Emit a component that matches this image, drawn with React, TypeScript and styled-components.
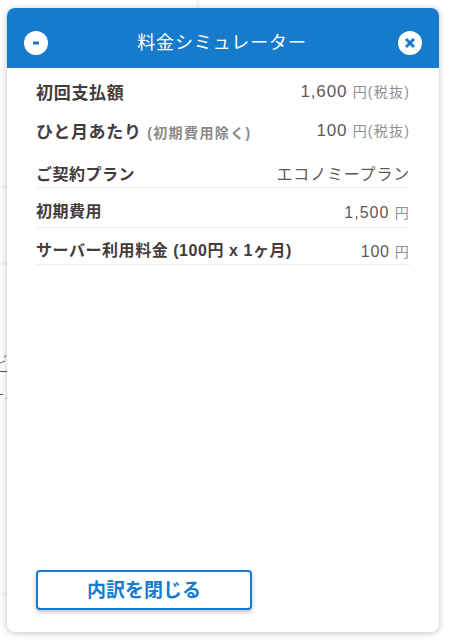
import styled, { createGlobalStyle } from 'styled-components'

const GlobalStyle = createGlobalStyle`
  html, body {
    margin: 0;
    padding: 0;
    background: #fff;
    font-family: 'Liberation Sans', Arial, 'Noto Sans CJK JP', sans-serif;
  }
`

const Page = styled.div`
  position: relative;
  width: 451px;
  height: 642px;
  overflow: hidden;
  background: #fff;
`

// faint remains of the page behind the modal
const BehindLine = styled.div<{ $top: number; $h: number; $color: string; $w?: number }>`
  position: absolute;
  left: 0;
  top: ${p => p.$top}px;
  width: ${p => p.$w ?? 7}px;
  height: ${p => p.$h}px;
  background: ${p => p.$color};
`

const BehindColumn = styled.div`
  position: absolute;
  left: 196px;
  top: 0;
  width: 4px;
  height: 8px;
  background: #f7f7f7;
`

const Modal = styled.div`
  position: absolute;
  left: 7px;
  top: 8px;
  width: 432px;
  height: 624px;
  display: flex;
  flex-direction: column;
  background: #fff;
  border-radius: 8px;
  box-shadow: 0 1px 6px rgba(0, 0, 0, 0.25);
  overflow: hidden;
`

const Header = styled.div`
  flex: none;
  height: 60px;
  padding: 10px 17px 0;
  display: flex;
  align-items: center;
  justify-content: space-between;
  background: #167bcc;
  color: #fff;
  box-sizing: border-box;
`

const Title = styled.div`
  font-size: 18px;
  line-height: 24px;
  letter-spacing: 0.9px;
  margin-left: -2px;
`

const RoundButton = styled.div`
  width: 24px;
  height: 24px;
  border-radius: 50%;
  background: #fff;
  display: flex;
  align-items: center;
  justify-content: center;
`

const Body = styled.div`
  flex: 1;
  display: flex;
  flex-direction: column;
  padding: 0 29px;
`

const SummaryRow = styled.div<{ $h: number }>`
  height: ${p => p.$h}px;
  display: flex;
  justify-content: space-between;
  align-items: center;
`

const DetailRow = styled.div<{ $h: number; $pad: number }>`
  height: ${p => p.$h}px;
  padding-bottom: ${p => p.$pad}px;
  box-sizing: border-box;
  display: flex;
  justify-content: space-between;
  align-items: flex-end;
  border-bottom: 1px solid #eeeeee;
`

const Label = styled.div<{ $size: number; $spacing: number }>`
  font-size: ${p => p.$size}px;
  letter-spacing: ${p => p.$spacing}px;
  font-weight: 700;
  color: #443b3b;
`

const Note = styled.span`
  font-size: 14px;
  letter-spacing: 1.4px;
  color: #8a8a8a;
`

const Value = styled.div<{ $size: number; $spacing: number }>`
  font-size: ${p => p.$size}px;
  letter-spacing: ${p => p.$spacing}px;
  color: #5f5757;
`

const Unit = styled.span`
  font-size: 14px;
  letter-spacing: 1.2px;
  color: #8f8f8f;
`

const Footer = styled.div`
  margin-top: auto;
  padding-bottom: 22px;
`

const CloseButton = styled.button`
  display: block;
  width: 216px;
  height: 40px;
  padding: 0 0 3px;
  background: #fff;
  border: 2px solid #167bcc;
  border-radius: 4px;
  box-shadow: 0 2px 4px rgba(0, 0, 0, 0.25);
  color: #167bcc;
  font-family: inherit;
  font-size: 19px;
  font-weight: 700;
`

const Speck = styled.svg`
  position: absolute;
  left: 0;
  top: 354px;
`

export default function App() {
  return (
    <Page>
      <GlobalStyle />
      <BehindColumn />
      <BehindLine $top={185} $h={4} $color="#f6f6f6" />
      <BehindLine $top={261} $h={4} $color="#f6f6f6" />
      <BehindLine $top={371} $h={1} $color="#5b4f4f" />
      <BehindLine $top={394} $h={1} $color="#5b4f4f" $w={3} />
      <BehindLine $top={592} $h={4} $color="#f6f6f6" />
      <Speck width="7" height="46" viewBox="0 0 7 46">
        <path d="M0 9 L5 7" stroke="#6b5f5f" strokeWidth="1" />
        <rect x="4" y="2" width="1" height="2" fill="#d0a060" />
        <rect x="5" y="1" width="1" height="2" fill="#7080c0" />
        <rect x="6" y="44" width="1" height="1" fill="#c8702a" />
      </Speck>
      <Modal>
        <Header>
          <RoundButton>
            <svg width="8" height="4" viewBox="0 0 8 4">
              <rect x="1" y="0.5" width="6" height="3" fill="#167bcc" />
            </svg>
          </RoundButton>
          <Title>料金シミュレーター</Title>
          <RoundButton>
            <svg width="12" height="12" viewBox="0 0 12 12">
              <path d="M2 2 L10 10 M10 2 L2 10" stroke="#167bcc" strokeWidth="3" />
            </svg>
          </RoundButton>
        </Header>
        <Body>
          <SummaryRow $h={47}>
            <Label $size={17} $spacing={0.7}>初回支払額</Label>
            <Value $size={17} $spacing={0.8}>1,600 <Unit>円(税抜)</Unit></Value>
          </SummaryRow>
          <SummaryRow $h={31}>
            <Label $size={17} $spacing={0.7}>ひと月あたり <Note>(初期費用除く)</Note></Label>
            <Value $size={17} $spacing={0.8}>100 <Unit>円(税抜)</Unit></Value>
          </SummaryRow>
          <DetailRow $h={42} $pad={2}>
            <Label $size={16} $spacing={0.5}>ご契約プラン</Label>
            <Value $size={16} $spacing={0.8}>エコノミープラン</Value>
          </DetailRow>
          <DetailRow $h={40} $pad={5}>
            <Label $size={16} $spacing={0.5}>初期費用</Label>
            <Value $size={16} $spacing={1}>1,500 <Unit>円</Unit></Value>
          </DetailRow>
          <DetailRow $h={37} $pad={3}>
            <Label $size={16} $spacing={0.55}>サーバー利用料金 (100円 x 1ヶ月)</Label>
            <Value $size={16} $spacing={0.7}>100 <Unit>円</Unit></Value>
          </DetailRow>
          <Footer>
            <CloseButton>内訳を閉じる</CloseButton>
          </Footer>
        </Body>
      </Modal>
    </Page>
  )
}
